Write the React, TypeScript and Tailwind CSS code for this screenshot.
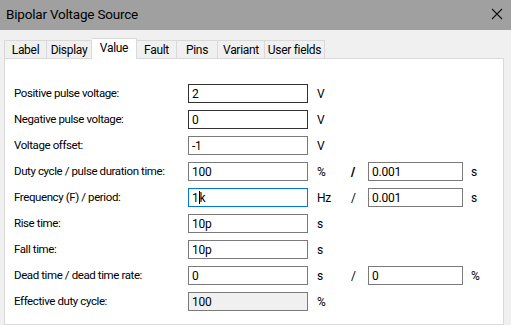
import React from "react";

type Row = {
  label: string;
  value: string;
  unit: string;
  border: string;
  bg?: string;
  slash?: "bold" | "thin";
  value2?: string;
  unit2?: string;
  caret?: boolean;
};

const rows: Row[] = [
  { label: "Positive pulse voltage:", value: "2", unit: "V", border: "border-[#333333]" },
  { label: "Negative pulse voltage:", value: "0", unit: "V", border: "border-[#333333]" },
  { label: "Voltage offset:", value: "-1", unit: "V", border: "border-[#7a7a7a]" },
  { label: "Duty cycle / pulse duration time:", value: "100", unit: "%", border: "border-[#7a7a7a]", slash: "bold", value2: "0.001", unit2: "s" },
  { label: "Frequency (F) / period:", value: "1k", unit: "Hz", border: "border-[#0078d7]", slash: "thin", value2: "0.001", unit2: "s", caret: true },
  { label: "Rise time:", value: "10p", unit: "s", border: "border-[#7a7a7a]" },
  { label: "Fall time:", value: "10p", unit: "s", border: "border-[#7a7a7a]" },
  { label: "Dead time / dead time rate:", value: "0", unit: "s", border: "border-[#7a7a7a]", slash: "thin", value2: "0", unit2: "%" },
  { label: "Effective duty cycle:", value: "100", unit: "%", border: "border-[#7a7a7a]", bg: "bg-[#f0f0f0]" },
];

const tabs: { t: string; w: string }[] = [
  { t: "Label", w: "w-[43px]" },
  { t: "Display", w: "w-[45px]" },
  { t: "Value", w: "w-[45px]" },
  { t: "Fault", w: "w-[40px]" },
  { t: "Pins", w: "w-[41px]" },
  { t: "Variant", w: "w-[47px]" },
  { t: "User fields", w: "w-[60px]" },
];

export default function App() {
  return (
    <div
      className="w-[511px] h-[325px] overflow-hidden bg-[#f0f0f0] flex flex-col text-black tracking-[-0.3px]"
      style={{ fontFamily: 'Roboto, "Liberation Sans", sans-serif' }}
    >
      <div className="h-[30px] shrink-0 bg-[#a0a0a0] flex items-center justify-between pl-[6px] pr-[8px]">
        <span className="text-[13.5px] leading-none tracking-[-0.2px]">Bipolar Voltage Source</span>
        <svg width="12" height="12" viewBox="0 0 12 12" className="mt-[-2px]">
          <path d="M1 1 L11 11 M11 1 L1 11" stroke="#111" strokeWidth="1.1" fill="none" />
        </svg>
      </div>
      <div className="flex items-end pl-[4px] mt-[8px] h-[20px] shrink-0 relative z-10">
        {tabs.map(({ t, w }) =>
          t === "Value" ? (
            <div
              key={t}
              className={`${w} h-[21px] mb-[-1px] bg-white border border-[#d9d9d9] border-b-0 border-l-0 flex items-start justify-center pt-[2px] text-[12px] leading-[14px] whitespace-nowrap`}
            >
              {t}
            </div>
          ) : (
            <div
              key={t}
              className={`${w} h-[18px] bg-[#f0f0f0] border border-[#d9d9d9] border-b-0 border-l-0 first:border-l flex items-center justify-center text-[12px] leading-none whitespace-nowrap`}
            >
              {t}
            </div>
          )
        )}
      </div>
      <div className="ml-[4px] w-[500px] flex-1 bg-white border border-[#d9d9d9] pt-[25px] pl-[9px] flex flex-col">
        {rows.map((r) => (
          <div key={r.label} className="h-[26px] flex items-start text-[11.5px] tracking-[-0.4px]">
            <div className="w-[174px] h-[19px] flex items-center whitespace-nowrap">{r.label}</div>
            <div
              className={`w-[120px] h-[19px] border ${r.border} ${r.bg ?? "bg-white"} flex items-center pl-[3px] text-[12px] tracking-[-0.2px]`}
            >
              {r.caret ? (
                <span className="flex items-center">
                  1<span className="inline-block w-[1px] h-[13px] bg-black"></span>k
                </span>
              ) : (
                r.value
              )}
            </div>
            <div className="w-[60px] h-[19px] flex items-center relative text-[12px]">
              <span className="pl-[9px]">{r.unit}</span>
              {r.slash && (
                <span
                  className={`absolute left-[43px] top-[1px] ${r.slash === "bold" ? "font-black" : ""}`}
                >
                  /
                </span>
              )}
            </div>
            {r.value2 !== undefined && (
              <>
                <div className="w-[95px] h-[19px] border border-[#7a7a7a] bg-white flex items-center pl-[3px] text-[12px] tracking-[-0.2px]">
                  {r.value2}
                </div>
                <div className="h-[19px] flex items-center pl-[8px] text-[12px]">{r.unit2}</div>
              </>
            )}
          </div>
        ))}
      </div>
    </div>
  );
}
